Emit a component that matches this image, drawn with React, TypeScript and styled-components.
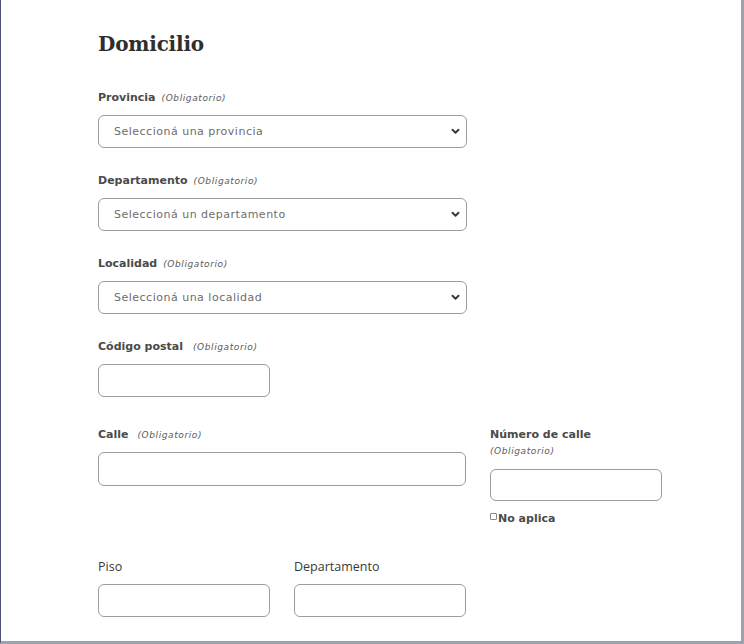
import React from "react";
import styled, { createGlobalStyle } from "styled-components";

const Global = createGlobalStyle`
  *, *::before, *::after { box-sizing: border-box; }
  html, body { margin: 0; padding: 0; background: #ffffff; }
  body { font-family: "DejaVu Sans", "Liberation Sans", sans-serif; }
`;

const Frame = styled.div`
  width: 744px;
  height: 644px;
  overflow: hidden;
  background: #ffffff;
  border-left: 1px solid #4b5177;
  border-right: 3px solid #9ea2ac;
  border-bottom: 3px solid #9ea2ac;
  padding: 32px 0 0 97px;
`;

const Heading = styled.h2`
  margin: 0 0 33px;
  font-family: "DejaVu Serif", "Liberation Serif", serif;
  font-weight: 700;
  font-size: 20px;
  line-height: 24px;
  color: #2e2e2e;
  letter-spacing: -0.2px;
`;

const Field = styled.div<{ $width?: number; $mb?: number }>`
  display: flex;
  flex-direction: column;
  width: ${(p) => (p.$width ? `${p.$width}px` : "auto")};
  margin-bottom: ${(p) => p.$mb ?? 0}px;
`;

const Label = styled.label<{ $light?: boolean }>`
  display: block;
  margin-bottom: 9px;
  font-family: ${(p) =>
    p.$light
      ? `"Open Sans", "Noto Sans", sans-serif`
      : `"DejaVu Sans", "Liberation Sans", sans-serif`};
  font-weight: ${(p) => (p.$light ? 400 : 700)};
  font-size: ${(p) => (p.$light ? "12.5px" : "11px")};
  line-height: 17px;
  color: ${(p) => (p.$light ? "#3a3a3a" : "#4a4a4a")};
`;

const Required = styled.span<{ $gap?: number }>`
  margin-left: ${(p) => p.$gap ?? 6}px;
  font-family: "DejaVu Sans", "Liberation Sans", sans-serif;
  font-style: italic;
  font-weight: 400;
  font-size: 9px;
  line-height: 1;
  letter-spacing: 0.6px;
  color: #5a5a5a;
`;

const RequiredBlock = styled.span`
  display: block;
  font-family: "DejaVu Sans", "Liberation Sans", sans-serif;
  font-style: italic;
  font-weight: 400;
  font-size: 9px;
  line-height: 17px;
  letter-spacing: 0.6px;
  color: #5a5a5a;
`;

const SelectWrap = styled.div`
  position: relative;
  width: 369px;
`;

const Select = styled.select`
  appearance: none;
  -webkit-appearance: none;
  display: block;
  width: 100%;
  height: 33px;
  padding: 0 28px 0 15px;
  border: 1px solid #9c9c9c;
  border-radius: 6px;
  background: #ffffff;
  font-family: "DejaVu Sans", "Liberation Sans", sans-serif;
  font-size: 11px;
  letter-spacing: 0.5px;
  color: #6d6d6d;
  outline: none;
`;

const Chevron = styled.svg`
  position: absolute;
  right: 7px;
  top: 13px;
  width: 9px;
  height: 7px;
  pointer-events: none;
`;

const Input = styled.input<{ $h?: number }>`
  display: block;
  width: 100%;
  height: ${(p) => p.$h ?? 33}px;
  border: 1px solid #9c9c9c;
  border-radius: 6px;
  background: #ffffff;
  padding: 0 12px;
  font-family: "DejaVu Sans", "Liberation Sans", sans-serif;
  font-size: 11px;
  outline: none;
`;

const TwoCol = styled.div`
  display: grid;
  grid-template-columns: 368px 172px;
  column-gap: 24px;
  align-items: start;
  margin-top: 29px;
`;

const CheckRow = styled.label`
  display: flex;
  align-items: center;
  margin-top: 10px;
  height: 14px;
  font-family: "DejaVu Sans", "Liberation Sans", sans-serif;
  font-weight: 700;
  font-size: 11px;
  color: #4a4a4a;
`;

const Check = styled.input`
  appearance: none;
  -webkit-appearance: none;
  width: 7px;
  height: 7px;
  margin: 0 1px 3px 0;
  border: 1px solid #8a8a8a;
  border-radius: 1px;
  background: #fff;
`;

const PairRow = styled.div`
  display: flex;
  gap: 24px;
  margin-top: 33px;
`;

const ChevronIcon = () => (
  <Chevron viewBox="0 0 9 7">
    <path
      d="M1.5 1.8 L4.5 4.8 L7.5 1.8"
      fill="none"
      stroke="#3c3c3c"
      strokeWidth="2"
      strokeLinecap="round"
      strokeLinejoin="round"
    />
  </Chevron>
);

const SelectField = ({
  label,
  placeholder,
  gap,
}: {
  label: string;
  placeholder: string;
  gap?: number;
}) => (
  <Field $mb={24}>
    <Label>
      {label}
      <Required $gap={gap}>(Obligatorio)</Required>
    </Label>
    <SelectWrap>
      <Select defaultValue="">
        <option value="">{placeholder}</option>
      </Select>
      <ChevronIcon />
    </SelectWrap>
  </Field>
);

export default function App() {
  return (
    <>
      <Global />
      <Frame>
        <Heading>Domicilio</Heading>
        <SelectField label="Provincia" placeholder="Seleccioná una provincia" />
        <SelectField label="Departamento" placeholder="Seleccioná un departamento" />
        <SelectField label="Localidad" placeholder="Seleccioná una localidad" />
        <Field $width={172}>
          <Label>
            Código postal
            <Required $gap={10}>(Obligatorio)</Required>
          </Label>
          <Input type="text" />
        </Field>
        <TwoCol>
          <Field>
            <Label>
              Calle
              <Required $gap={9}>(Obligatorio)</Required>
            </Label>
            <Input type="text" $h={34} />
          </Field>
          <Field>
            <Label>
              Número de calle
              <RequiredBlock>(Obligatorio)</RequiredBlock>
            </Label>
            <Input type="text" $h={32} />
            <CheckRow>
              <Check type="checkbox" />
              No aplica
            </CheckRow>
          </Field>
        </TwoCol>
        <PairRow>
          <Field $width={172}>
            <Label $light>Piso</Label>
            <Input type="text" />
          </Field>
          <Field $width={172}>
            <Label $light>Departamento</Label>
            <Input type="text" />
          </Field>
        </PairRow>
      </Frame>
    </>
  );
}
